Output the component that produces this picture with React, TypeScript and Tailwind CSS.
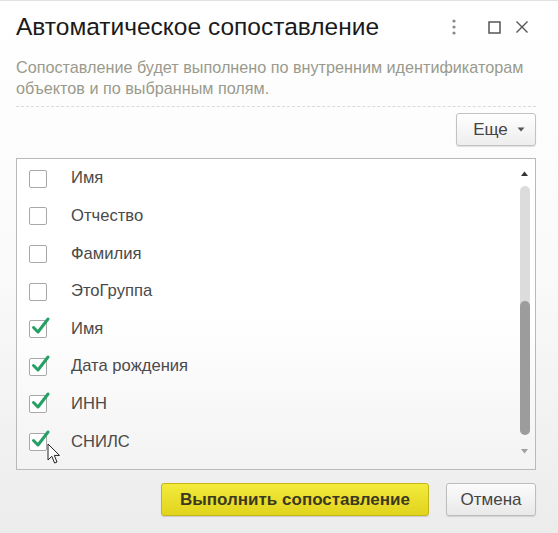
import React from "react";

const items: { label: string; checked: boolean }[] = [
  { label: "Имя", checked: false },
  { label: "Отчество", checked: false },
  { label: "Фамилия", checked: false },
  { label: "ЭтоГруппа", checked: false },
  { label: "Имя", checked: true },
  { label: "Дата рождения", checked: true },
  { label: "ИНН", checked: true },
  { label: "СНИЛС", checked: true },
];

function Checkbox({ checked }: { checked: boolean }) {
  return (
    <div className="relative w-[18px] h-[18px] rounded-[2px] border border-[#a8a8a8] bg-white shrink-0">
      {checked && (
        <svg
          className="absolute left-[1px] top-[-5px]"
          width="20"
          height="20"
          viewBox="0 0 20 20"
        >
          <path
            d="M2.5 11.5 L7 16 L17 3"
            fill="none"
            stroke="#24a065"
            strokeWidth="3"
            strokeLinecap="round"
            strokeLinejoin="round"
          />
        </svg>
      )}
    </div>
  );
}

export default function App() {
  return (
    <div
      className="relative w-[558px] h-[533px] overflow-hidden bg-gradient-to-b from-white via-[#fafafa] to-[#ececec] border-t border-[#e2e2e2] px-[16px] text-[#333]"
      style={{ fontFamily: '"Liberation Sans", Arial, sans-serif' }}
    >
      {/* Title row */}
      <div className="flex items-center h-[28px] mt-[12px]">
        <div className="text-[24.5px] leading-[28px] text-[#1a1a1a] flex-1">
          Автоматическое сопоставление
        </div>
        <div className="flex items-center">
          <svg width="6" height="18" viewBox="0 0 6 18" className="mr-[31px]">
            <circle cx="3" cy="3" r="1.6" fill="#8a8a8a" />
            <circle cx="3" cy="9" r="1.6" fill="#8a8a8a" />
            <circle cx="3" cy="15" r="1.6" fill="#8a8a8a" />
          </svg>
          <svg width="13" height="13" viewBox="0 0 13 13" className="mr-[14px]">
            <rect x="1" y="1" width="11" height="11" fill="none" stroke="#555" strokeWidth="1.5" />
          </svg>
          <svg width="14" height="14" viewBox="0 0 14 14" className="mr-[13px]">
            <path d="M1.5 1.5 L12.5 12.5 M12.5 1.5 L1.5 12.5" stroke="#555" strokeWidth="1.4" />
          </svg>
        </div>
      </div>

      {/* Subtitle */}
      <div className="mt-[16px] text-[16.2px] leading-[21px] text-[#9a9a8c] whitespace-nowrap">
        Сопоставление будет выполнено по внутренним идентификаторам
        <br />
        объектов и по выбранным полям.
      </div>

      {/* Dashed separator */}
      <div className="mt-[7px] border-t border-dashed border-[#dadada] mr-[6px]" />

      {/* Toolbar */}
      <div className="flex justify-end mt-[6px] pr-[6px]">
        <button className="h-[33px] w-[80px] flex items-center justify-center gap-[9px] rounded-[3px] border border-[#c2c2c2] bg-gradient-to-b from-white to-[#ededed] shadow-[0_1px_1px_rgba(0,0,0,0.12)] text-[17px] text-[#444]">
          <span className="ml-[6px]">Еще</span>
          <svg width="8" height="5" viewBox="0 0 8 5">
            <path d="M0.5 0.5 L7.5 0.5 L4 4.5 Z" fill="#555" />
          </svg>
        </button>
      </div>

      {/* List */}
      <div className="mt-[12px] mr-[6px] h-[312px] border border-[#b9b9b9] bg-gradient-to-b from-white via-white to-[#f3f3f3] flex">
        <div className="flex-1 pt-[1px]">
          {items.map((it, i) => (
            <div key={i} className="h-[37.6px] flex items-center pl-[12px]">
              <Checkbox checked={it.checked} />
              <span className="ml-[24px] text-[16.6px] text-[#4a4a4a]">{it.label}</span>
            </div>
          ))}
        </div>
        <div className="w-[17px] flex flex-col items-center pt-[12px] mr-[2px]">
          <svg width="7" height="5" viewBox="0 0 7 5">
            <path d="M0 5 L7 5 L3.5 0.5 Z" fill="#333" />
          </svg>
          <div className="mt-[10px] w-[10px] h-[249px] rounded-[5px] bg-[#dcdcdc] flex flex-col justify-end">
            <div className="h-[134px] w-[10px] rounded-[5px] bg-[#9c9c9c]" />
          </div>
          <svg width="7" height="5" viewBox="0 0 7 5" className="mt-[14px]">
            <path d="M0 0 L7 0 L3.5 4.5 Z" fill="#a0a0a0" />
          </svg>
        </div>
      </div>

      {/* Footer buttons */}
      <div className="flex justify-end gap-[17px] mt-[13px] mr-[6px]">
        <button className="h-[33px] w-[268px] rounded-[3px] border border-[#c4b716] bg-gradient-to-b from-[#f3ea3a] to-[#e2d41c] shadow-[0_1px_1px_rgba(0,0,0,0.15)] text-[17px] font-bold text-[#3b3a20] whitespace-nowrap">
          Выполнить сопоставление
        </button>
        <button className="h-[33px] w-[90px] rounded-[3px] border border-[#bdbdbd] bg-gradient-to-b from-[#fbfbfb] to-[#e9e9e9] shadow-[0_1px_1px_rgba(0,0,0,0.12)] text-[17px] text-[#444]">
          Отмена
        </button>
      </div>

      {/* Mouse cursor */}
      <svg
        className="absolute left-[47px] top-[442px]"
        width="14"
        height="22"
        viewBox="0 0 14 22"
      >
        <path
          d="M1 1 L1 17 L4.8 13.3 L7.6 20 L10 19 L7.3 12.4 L12.5 12.4 Z"
          fill="#fff"
          stroke="#222"
          strokeWidth="1"
          strokeLinejoin="round"
        />
      </svg>
    </div>
  );
}
